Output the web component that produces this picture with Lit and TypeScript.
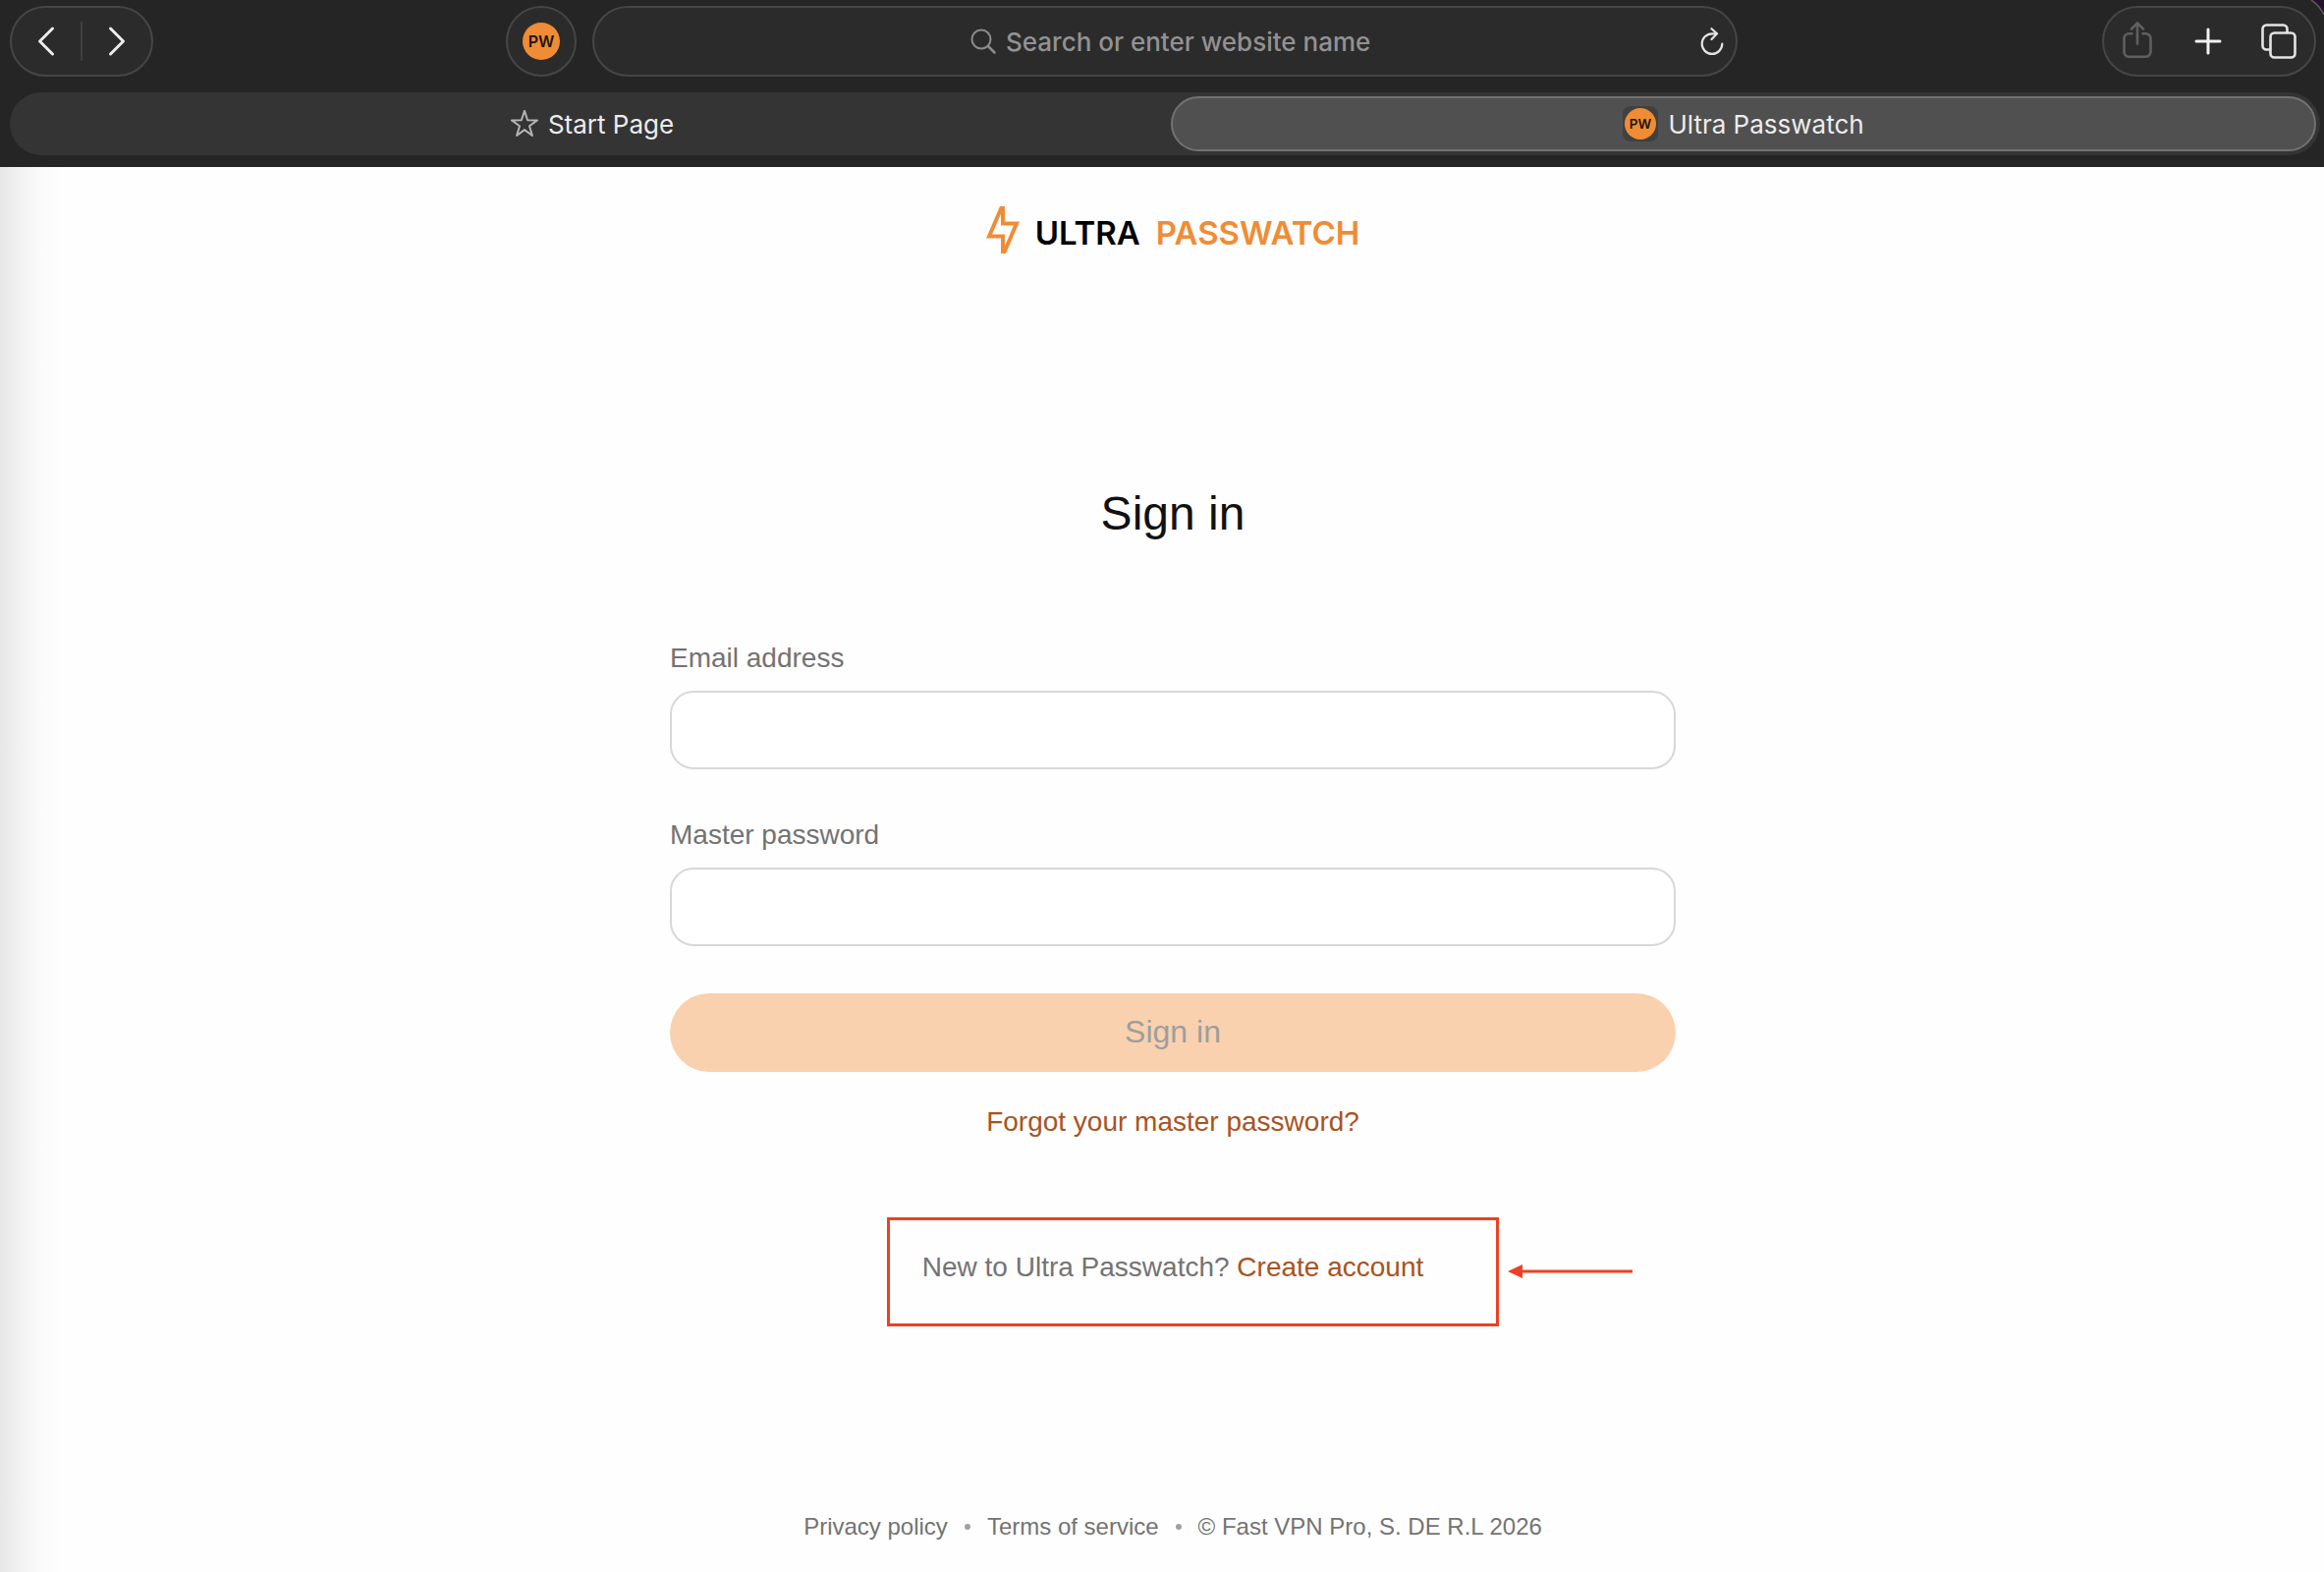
import { LitElement, html, css } from "lit";
import { customElement, state } from "lit/decorators.js";

const sansPage = css`"Liberation Sans", Arial, sans-serif`;
const sansUi = css`Inter, "Liberation Sans", sans-serif`;

const badge = (size: number) => html`
  <svg width=${size} height=${size} viewBox="0 0 38 38" role="img" aria-label="PW">
    <circle cx="19" cy="19" r="19" fill="#f08c35" />
    <text x="19" y="25" text-anchor="middle" font-family="Inter, sans-serif" font-size="16" font-weight="600" fill="#1d1508">PW</text>
  </svg>
`;

@customElement("browser-bar")
export class BrowserBar extends LitElement {
  static styles = css`
    :host {
      display: block;
      position: relative;
      background: #252525;
      font-family: ${sansUi};
      color: #ececec;
    }
    * {
      box-sizing: border-box;
    }
    svg {
      display: block;
      flex: none;
    }
    button {
      font: inherit;
      color: inherit;
      background: none;
      border: 0;
      padding: 0;
      display: flex;
      align-items: center;
      justify-content: center;
    }
    .tools {
      display: grid;
      grid-template-columns: 1fr minmax(0, 1166px) 1fr;
      gap: 16px;
      padding: 6px 4px 16px 10px;
    }
    .side {
      display: flex;
      justify-content: space-between;
    }
    .side.end {
      justify-content: flex-end;
      padding-right: 4px;
    }
    .pill {
      height: 72px;
      border: 2px solid #464646;
      border-radius: 36px;
      background: #2b2b2b;
      display: flex;
      align-items: center;
    }
    .nav button {
      width: 70px;
      height: 68px;
    }
    .rule {
      width: 2px;
      height: 40px;
      background: #3f3f3f;
    }
    .site {
      width: 72px;
      justify-content: center;
    }
    .address {
      padding: 0 12px;
    }
    .address label {
      flex: 1;
      display: flex;
      align-items: center;
      justify-content: center;
      gap: 10px;
      padding-left: 36px;
    }
    .address input {
      width: 372px;
      height: 40px;
      padding: 0;
      border: 0;
      outline: 0;
      background: none;
      font: 500 26px ${sansUi};
      color: #ececec;
    }
    .address input::placeholder {
      color: #929292;
      opacity: 1;
    }
    .actions {
      gap: 4px;
      padding-right: 2px;
    }
    .actions button {
      width: 68px;
      height: 68px;
    }
    .tabs {
      margin: 0 4px 0 10px;
      height: 64px;
      border-radius: 32px;
      background: #343434;
      padding: 4px;
      display: grid;
      grid-template-columns: 1fr 1fr;
      gap: 12px;
    }
    .tab {
      gap: 10px;
      border: 2px solid transparent;
      border-radius: 28px;
      font-size: 26px;
    }
    .tab:first-child {
      padding-left: 12px;
    }
    .tab.active {
      background: #505050;
      border-color: #727272;
    }
    .favicon {
      width: 36px;
      height: 36px;
      border-radius: 8px;
      background: #404040;
      display: grid;
      place-items: center;
    }
    .foot {
      height: 12px;
    }
    .corner {
      position: absolute;
      top: 0;
      right: 0;
    }
  `;

  @state() private active = 1;

  render() {
    return html`
      <div class="tools">
        <div class="side">
          <div class="pill nav">
            <button aria-label="Back">
              <svg width="18" height="34" viewBox="0 0 18 34" fill="none" stroke="#ececec" stroke-width="3" stroke-linecap="round" stroke-linejoin="round">
                <path d="M15.500 4 2.500 17 15.500 30" />
              </svg>
            </button>
            <span class="rule"></span>
            <button aria-label="Forward">
              <svg width="18" height="34" viewBox="0 0 18 34" fill="none" stroke="#ececec" stroke-width="3" stroke-linecap="round" stroke-linejoin="round">
                <path d="M2.500 4 15.500 17 2.500 30" />
              </svg>
            </button>
          </div>
          <button class="pill site" aria-label="Site extension">${badge(38)}</button>
        </div>
        <div class="pill address">
          <label>
            <svg width="26" height="26" viewBox="0 0 26 26" fill="none" stroke="#8c8c8c" stroke-width="2" stroke-linecap="round">
              <circle cx="11" cy="11" r="9.500" />
              <path d="m18 18 6.500 6.500" stroke-width="2.500" />
            </svg>
            <input type="text" placeholder="Search or enter website name" aria-label="Search or enter website name" />
          </label>
          <button aria-label="Reload">
            <svg width="24" height="28" viewBox="0 0 24 28" fill="none" stroke="#e4e4e4" stroke-width="2.200" stroke-linecap="round" stroke-linejoin="round">
              <path d="M16.500 6.300H12A10.300 10.300 0 1 0 22.300 16.600" />
              <path d="m11.500 1.200 5.500 5.100-5.500 5.700" />
            </svg>
          </button>
        </div>
        <div class="side end">
          <div class="pill actions">
            <button aria-label="Share" disabled>
              <svg width="30" height="40" viewBox="0 0 30 40" fill="none" stroke="#5f5f5f" stroke-width="2.600" stroke-linecap="round" stroke-linejoin="round">
                <path d="M9.500 12.300H6.500a5 5 0 0 0-5 5V30.700a5 5 0 0 0 5 5h17a5 5 0 0 0 5-5V17.300a5 5 0 0 0-5-5h-3" />
                <path d="M15 22.500V2M9 7.500 15 1.500 21 7.500" />
              </svg>
            </button>
            <button aria-label="New tab">
              <svg width="28" height="28" viewBox="0 0 28 28" stroke="#f2f2f2" stroke-width="3" stroke-linecap="round">
                <path d="M14 2v24M2 14h24" />
              </svg>
            </button>
            <button aria-label="Show all tabs">
              <svg width="36" height="36" viewBox="0 0 36 36" fill="none" stroke="#e4e4e4" stroke-width="2.600" stroke-linejoin="round">
                <rect x="9.500" y="9.500" width="25" height="25" rx="4" />
                <path d="M9.500 26.500H5.500a4 4 0 0 1-4-4V5.500a4 4 0 0 1 4-4h17a4 4 0 0 1 4 4v4" />
              </svg>
            </button>
          </div>
        </div>
      </div>
      <div class="tabs" role="tablist">
        <button class="tab ${this.active === 0 ? "active" : ""}" role="tab" aria-selected=${this.active === 0}>
          <svg width="28" height="28" viewBox="0 0 28 28" fill="none" stroke="#b4b4b4" stroke-width="2" stroke-linejoin="round">
            <path d="M14 0.800 17.100 10.300 27 10.400 19 16.300 21.900 26 14 20.100 6.100 26 9 16.300 1 10.400 10.900 10.300Z" />
          </svg>
          <span>Start Page</span>
        </button>
        <button class="tab ${this.active === 1 ? "active" : ""}" role="tab" aria-selected=${this.active === 1}>
          <span class="favicon">${badge(32)}</span>
          <span>Ultra Passwatch</span>
        </button>
      </div>
      <div class="foot"></div>
      <svg class="corner" width="14" height="16" viewBox="0 0 14 16" aria-hidden="true">
        <path d="M1 0H14V15Q9 5 1 0Z" fill="#24102a" />
        <path d="M1 0Q9 5 14 15" fill="none" stroke="#5a5a5a" stroke-width="1.500" />
      </svg>
    `;
  }
}

@customElement("sign-in-page")
export class SignInPage extends LitElement {
  static styles = css`
    :host {
      display: flex;
      flex-direction: column;
      align-items: center;
      flex: 1;
      padding: 40px 0 30px 22px;
      background: linear-gradient(to right, #e7e7e7, #f4f4f4 24px, #fbfbfb 42px, #fefefe 64px);
      font-family: ${sansPage};
      font-size: 28px;
      line-height: 44px;
      color: #737373;
    }
    * {
      box-sizing: border-box;
    }
    a {
      color: #a9531f;
      text-decoration: none;
    }
    .logo {
      display: flex;
      align-items: flex-start;
      height: 48px;
      gap: 16px;
      font: 600 33px/54px ${sansUi};
      color: #000;
    }
    .logo svg {
      display: block;
    }
    .accent {
      color: #f08c35;
    }
    h1 {
      margin: 233px 0 93px;
      font-size: 48px;
      font-weight: 400;
      line-height: 64px;
      color: #111;
    }
    form {
      width: 100%;
      max-width: 1024px;
      display: flex;
      flex-direction: column;
    }
    .field {
      display: flex;
      flex-direction: column;
      gap: 11px;
      margin-bottom: 45px;
    }
    .field input {
      width: 100%;
      height: 80px;
      padding: 0 24px;
      border: 2px solid #d8d8d8;
      border-radius: 24px;
      background: #fff;
      font: inherit;
      color: #111;
    }
    .submit {
      height: 80px;
      margin: 3px 0 29px;
      padding: 0 24px 2px;
      border: 0;
      border-radius: 40px;
      background: #f9d1ae;
      font: 32px ${sansPage};
      color: #9e9e9e;
    }
    .forgot {
      align-self: center;
    }
    .signup {
      position: relative;
      margin: 104px 0 0;
    }
    .mark {
      position: absolute;
      inset: -29px -77px -38px -36px;
      border: 3px solid #ee4023;
      pointer-events: none;
    }
    .arrow {
      position: absolute;
      left: calc(100% + 86px);
      top: 19px;
    }
    footer {
      margin-top: auto;
      display: flex;
      align-items: center;
      gap: 17px;
      font-size: 24px;
      line-height: 32px;
    }
    footer a {
      color: inherit;
    }
    .dot {
      width: 6px;
      height: 6px;
      border-radius: 3px;
      background: #a0a0a0;
    }
  `;

  render() {
    return html`
      <div class="logo">
        <svg width="34" height="48" viewBox="0 0 34 48" fill="none" stroke="#f08c35" stroke-width="4" aria-hidden="true">
          <path d="M17 -2V17.500H31L17 50V30.500H3Z" />
        </svg>
        <span>ULTRA</span>
        <span class="accent">PASSWATCH</span>
      </div>
      <h1>Sign in</h1>
      <form>
        <div class="field">
          <label for="email">Email address</label>
          <input id="email" type="email" autocomplete="off" />
        </div>
        <div class="field">
          <label for="password">Master password</label>
          <input id="password" type="password" autocomplete="off" />
        </div>
        <button class="submit" type="submit" disabled>Sign in</button>
        <a class="forgot" href="#forgot">Forgot your master password?</a>
      </form>
      <p class="signup">
        New to Ultra Passwatch? <a href="#create">Create account</a>
        <span class="mark"></span>
        <svg class="arrow" width="127" height="14" viewBox="0 0 127 14" fill="#ee4023" aria-hidden="true">
          <path d="M0 7 15 0V5.500H127V8.500H15V14Z" />
        </svg>
      </p>
      <footer>
        <a href="#privacy">Privacy policy</a>
        <span class="dot"></span>
        <a href="#terms">Terms of service</a>
        <span class="dot"></span>
        <span>© Fast VPN Pro, S. DE R.L 2026</span>
      </footer>
    `;
  }
}

@customElement("app-root")
export class AppRoot extends LitElement {
  static styles = css`
    :host {
      display: flex;
      flex-direction: column;
      min-height: 100vh;
      background: #fefefe;
    }
  `;

  render() {
    return html`
      <browser-bar></browser-bar>
      <sign-in-page></sign-in-page>
    `;
  }
}
